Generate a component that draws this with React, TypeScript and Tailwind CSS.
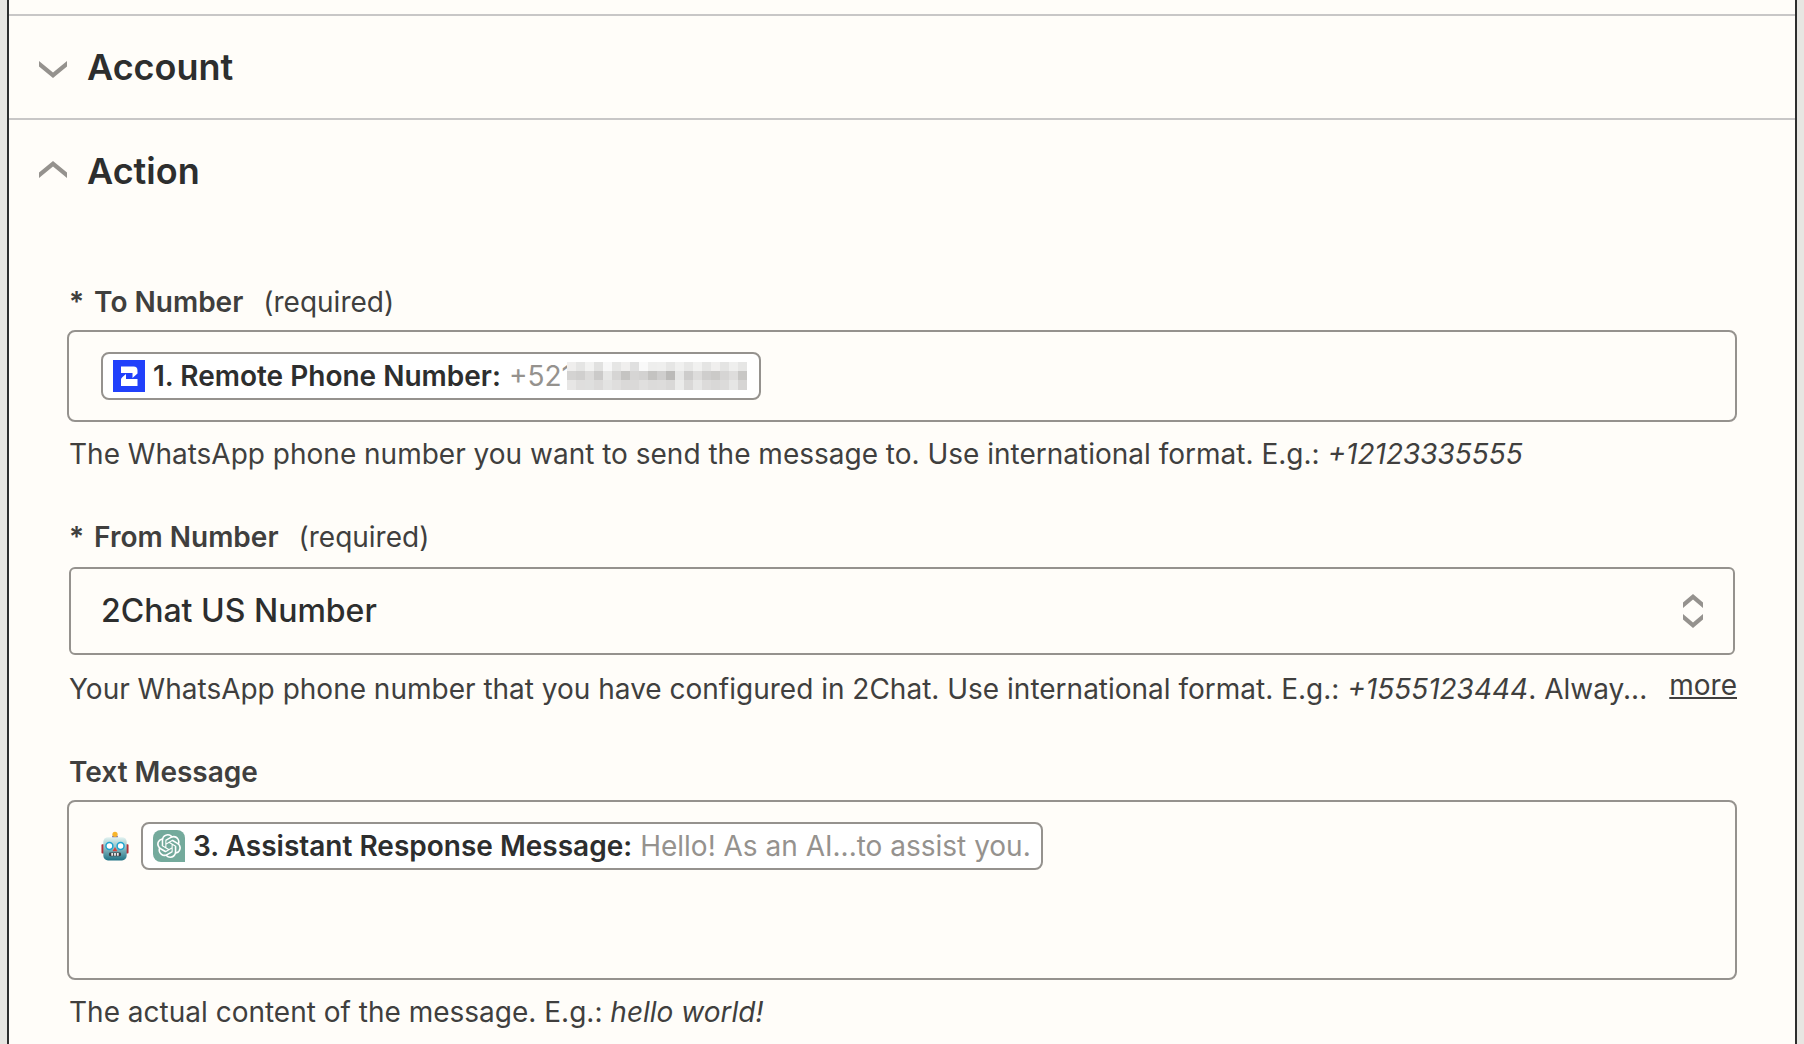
import { useState, type ReactNode } from "react";
import { SiOpenai } from "react-icons/si";

function SectionChevron({ up }: { up: boolean }) {
  return (
    <svg viewBox="0 0 28 21" className="h-[21px] w-7 shrink-0" fill="#95928e" aria-hidden="true">
      {up ? <path d="M14 0 28 11.500V17L14 5.500 0 17V11.500Z" /> : <path d="M14 21 28 9.500V4L14 15.500 0 4V9.500Z" />}
    </svg>
  );
}

function SelectArrows() {
  return (
    <svg viewBox="0 0 20 34" className="h-[34px] w-5" fill="#95928e" aria-hidden="true">
      <path d="M10 0 20 8.500V14L10 5.500 0 14V8.500Z" />
      <path d="M10 34 20 25.500V20L10 28.500 0 20V25.500Z" />
    </svg>
  );
}

function TwoChatLogo() {
  return (
    <svg viewBox="0 0 32 32" className="size-8 shrink-0" aria-hidden="true">
      <rect width="32" height="32" fill="#2140fb" />
      <path
        fill="#fff"
        d="M8 6.500H20.500Q24.500 6.500 24.500 10.500V13.500L19.500 18V13H8ZM13 14V19H24.500V26H8V19.500Q8 18 9.500 17Z"
      />
    </svg>
  );
}

function Robot() {
  return (
    <svg viewBox="0 0 30 32" className="h-8 w-7 shrink-0" role="img" aria-label="robot">
      <defs>
        <linearGradient id="head" x1="0" y1="0" x2="0" y2="1">
          <stop offset="0" stopColor="#e3f3f1" />
          <stop offset="0.45" stopColor="#8fc0c6" />
          <stop offset="1" stopColor="#1f7285" />
        </linearGradient>
      </defs>
      <rect x="0.500" y="14" width="4" height="10" rx="1" fill="#b3303a" />
      <rect x="25.500" y="14" width="4" height="10" rx="1" fill="#b3303a" />
      <path d="M12 5H18V7.500H12Z" fill="#7a6a9c" />
      <circle cx="15" cy="3.500" r="2.800" fill="#f7b52c" />
      <rect x="2.500" y="6.500" width="25" height="25" rx="5" fill="url(#head)" />
      <circle cx="9" cy="16" r="4.500" fill="#1ea3cf" />
      <circle cx="21" cy="16" r="4.500" fill="#1ea3cf" />
      <circle cx="9" cy="16" r="2.900" fill="#fff" />
      <circle cx="21" cy="16" r="2.900" fill="#fff" />
      <path d="M15 17 17.600 21.500H12.400Z" fill="#d9433c" />
      <rect x="8.500" y="23" width="13" height="4" rx="1.500" fill="#3b3a40" />
      <path d="M11 23.500H13V26.500H11ZM14 23.500H16V26.500H14ZM17 23.500H19V26.500H17Z" fill="#e8e8e8" />
    </svg>
  );
}

const MOSAIC = [
  ["#efeeed", "#e5e5e4", "#f2f2f1", "#e1e1e0", "#f7f7f7", "#e6e6e5", "#f0efee", "#e0e0e0", "#f9f9f9", "#eeeeed", "#efefee", "#e6e6e5", "#f0f0ef", "#e7e7e6", "#f1f1f0", "#e5e5e4", "#f0efee", "#e4e4e3", "#efefee", "#e6e6e5"],
  ["#d4d3d2", "#d0cfce", "#dcdbda", "#cbcac9", "#e6e6e5", "#d6d5d4", "#c5c4c2", "#d6d5d4", "#d3d2d1", "#c4c3c1", "#cfcecd", "#bbbab8", "#e6e6e5", "#cdcccb", "#dddcdb", "#cfcecd", "#cbcac8", "#d6d5d4", "#dedddc", "#c8c7c5"],
  ["#e7e6e5", "#dfdedd", "#dfdfde", "#dbdad9", "#e3e3e2", "#dfdedd", "#dad9d8", "#dad9d8", "#e0dfde", "#dcdbda", "#dddcdb", "#d9d8d7", "#ebebea", "#d9d8d7", "#e6e6e5", "#dcdbda", "#d9d8d7", "#dcdbda", "#e6e6e5", "#d6d5d4"],
];

function Mosaic() {
  return (
    <svg viewBox="0 0 180 28" className="mr-0.5 -ml-1.5 h-7 w-[180px] shrink-0" shapeRendering="crispEdges" role="img" aria-label="hidden digits">
      {MOSAIC.map((row, y) => row.map((fill, x) => <rect key={`${x}-${y}`} x={x * 9} y={y * 9} width="9" height="10" fill={fill} />))}
    </svg>
  );
}

function Chip({ icon, name, children }: { icon: ReactNode; name: string; children: ReactNode }) {
  return (
    <span className="flex h-12 shrink-0 items-center rounded-lg border-2 border-[#95928e] bg-white px-2.5 whitespace-nowrap text-[#95928e]">
      {icon}
      <b className="mr-2 ml-2 font-semibold text-[#2d2e2e]">{name}</b>
      {children}
    </span>
  );
}

function SectionHeader({ title, open, onClick }: { title: string; open: boolean; onClick: () => void }) {
  return (
    <h2 className="border-t-2 border-[#c8c7c7]">
      <button type="button" aria-expanded={open} onClick={onClick} className="flex h-[102px] w-full items-center gap-5 px-[30px] text-left text-4xl font-semibold text-[#2d2e2e]">
        <SectionChevron up={open} />
        {title}
      </button>
    </h2>
  );
}

function Label({ htmlFor, required = false, children }: { htmlFor: string; required?: boolean; children: ReactNode }) {
  return (
    <label htmlFor={htmlFor} className="flex px-0.5 leading-9">
      {required && <b className="mr-2.5 font-semibold">*</b>}
      <b className="font-semibold">{children}</b>
      {required && <span className="ml-5">(required)</span>}
    </label>
  );
}

export default function App() {
  const [account, setAccount] = useState(false);
  const [action, setAction] = useState(true);

  return (
    <div className="h-screen overflow-hidden bg-[#e7e6e2] px-[7px] font-['Inter',sans-serif] text-[28px] text-[#403f3e]">
      <main className="min-h-full border-x-2 border-[#2d2e2e] bg-[#fffdf9] pt-3.5">
        <SectionHeader title="Account" open={account} onClick={() => setAccount(!account)} />
        <SectionHeader title="Action" open={action} onClick={() => setAction(!action)} />
        {action && (
          <form className="flex flex-col gap-[47px] px-[58px] pt-[62px]">
            <div>
              <Label htmlFor="to" required>To Number</Label>
              <div className="mt-2.5 flex rounded-lg border-2 border-[#95928e] px-8 py-5">
                <Chip icon={<TwoChatLogo />} name="1. Remote Phone Number:">
                  +521
                  <Mosaic />
                </Chip>
                <input id="to" type="text" className="min-w-0 flex-1 bg-transparent px-2 outline-none" />
              </div>
              <p className="mt-3.5 px-0.5 leading-9">
                The WhatsApp phone number you want to send the message to. Use international format. E.g.: <i>+12123335555</i>
              </p>
            </div>

            <div>
              <Label htmlFor="from" required>From Number</Label>
              <div className="mx-0.5 mt-3 grid items-center">
                <select id="from" className="col-start-1 row-start-1 h-[88px] w-full appearance-none rounded-md border-2 border-[#95928e] bg-transparent px-[30px] text-[32px] font-medium text-[#2d2e2e]">
                  <option>2Chat US Number</option>
                </select>
                <span className="pointer-events-none col-start-1 row-start-1 mr-8 justify-self-end">
                  <SelectArrows />
                </span>
              </div>
              <div className="mt-4 flex items-start justify-between pl-0.5 leading-9">
                <p className="min-w-0 truncate">
                  Your WhatsApp phone number that you have configured in 2Chat. Use international format. E.g.: <i>+1555123444</i>. Alway...
                </p>
                <a href="#more" className="-mt-1 shrink-0 underline">more</a>
              </div>
            </div>

            <div>
              <Label htmlFor="message">Text Message</Label>
              <div className="mt-2.5 flex h-[180px] items-start rounded-lg border-2 border-[#95928e] px-8 py-5">
                <span className="mr-3 flex h-12 items-center">
                  <Robot />
                </span>
                <Chip
                  icon={
                    <span className="flex size-8 items-center justify-center rounded-lg rounded-br-none bg-[#74aa9c] text-white">
                      <SiOpenai size={24} />
                    </span>
                  }
                  name="3. Assistant Response Message:"
                >
                  Hello! As an AI...to assist you.
                </Chip>
                <textarea id="message" className="h-full min-w-0 flex-1 resize-none bg-transparent px-2 outline-none" />
              </div>
              <p className="mt-3.5 px-0.5 leading-9">
                The actual content of the message. E.g.: <i>hello world!</i>
              </p>
            </div>
          </form>
        )}
      </main>
    </div>
  );
}
